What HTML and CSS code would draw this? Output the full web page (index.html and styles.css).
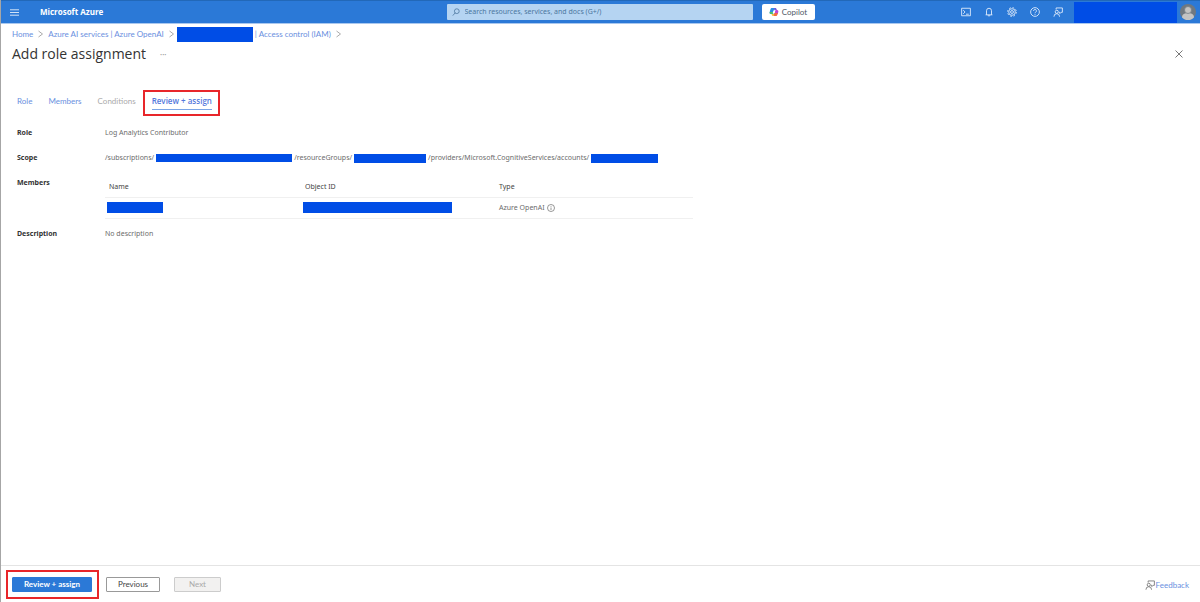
FILE: index.html
```html
<!DOCTYPE html>
<html lang="en">
<head>
<meta charset="utf-8">
<meta name="viewport" content="width=device-width, initial-scale=1">
<title>Add role assignment - Microsoft Azure</title>
<link rel="stylesheet" href="styles.css">
</head>
<body>
<svg class="defs" aria-hidden="true">
  <symbol id="person-feedback" viewBox="0 0 16 16">
    <path d="M5 4V1.500h10v7h-2l-2 2V8.500H9.500M6 10.200a2.500 2.500 0 1 0 0-5 2.500 2.500 0 0 0 0 5zM1.500 15.500a4.500 4.800 0 0 1 9 0"/>
  </symbol>
  <symbol id="chevron" viewBox="0 0 5 8"><path d="M.5 1l4 3-4 3"/></symbol>
</svg>
<header class="topbar">
  <div class="topbar-left">
    <button class="icon-button menu" aria-label="Show portal menu"><svg class="icon" viewBox="0 0 10 10"><path d="M0 2h10M0 5h10M0 8h10"/></svg></button>
    <a class="brand" href="#">Microsoft Azure</a>
  </div>
  <div class="topbar-search">
    <label class="search">
      <svg class="icon search-icon" viewBox="0 0 10 10"><circle cx="6" cy="4" r="3"/><path d="M4 6L1 9.500"/></svg>
      <input type="text" aria-label="Search" placeholder="Search resources, services, and docs (G+/)">
    </label>
    <button class="copilot">
      <svg class="copilot-logo" viewBox="0 0 10 10">
        <path fill="#2b8fe6" d="M3 1h3.200l-2 6H2C.8 7 .4 6 .7 5l.8-2.800C1.700 1.500 2.200 1 3 1z"/>
        <path fill="#4bbf6b" d="M.7 5h3.600L3.600 7H2C.8 7 .4 6 .7 5z"/>
        <path fill="#7659d8" d="M5 1h1.500c.6 0 .8.500 1 1l.4 1H5.500z"/>
        <path fill="#c048d4" d="M6.500 3H8c1.200 0 1.600 1 1.300 2L8.700 7H5.200z"/>
        <path fill="#f36a43" d="M5.200 6h3.700l-.4 1.500C8.300 8.400 7.800 9 7 9H4.300z"/>
        <path fill="#f5b83d" d="M2.500 7h2.700l-.6 2H4c-.8 0-1.200-.8-1.500-2z"/>
        <path fill="#fff" d="M4.400 3.500h1.800L5.500 6.300H3.700z"/>
      </svg>
      <span>Copilot</span>
    </button>
  </div>
  <div class="topbar-right">
    <button class="icon-button" aria-label="Cloud Shell"><svg class="icon" viewBox="0 0 16 16"><path d="M1 2h14v12H1zM3.500 5l3 3-3 3M8 11.500h4.500"/></svg></button>
    <button class="icon-button" aria-label="Notifications"><svg class="icon" viewBox="0 0 16 16"><path d="M2.500 12.500h11M4 12.500V6a4 4 0 0 1 8 0v6.500M6.500 13a1.500 1.500 0 0 0 3 0"/></svg></button>
    <button class="icon-button" aria-label="Settings"><svg class="icon" viewBox="0 0 16 16"><circle cx="8" cy="8" r="5.300"/><circle cx="8" cy="8" r="2.300"/><circle class="teeth" cx="8" cy="8" r="7"/></svg></button>
    <button class="icon-button" aria-label="Help"><svg class="icon" viewBox="0 0 16 16"><circle cx="8" cy="8" r="7"/><path d="M5.700 6.300a2.300 2.300 0 1 1 3.500 1.900C8.300 8.800 8 9 8 10M8 11.300v1.300"/></svg></button>
    <button class="icon-button" aria-label="Feedback"><svg class="icon"><use href="#person-feedback"/></svg></button>
    <div class="account"></div>
    <button class="avatar" aria-label="Account"><svg viewBox="0 0 16 16"><circle cx="8" cy="8" r="8" fill="#6f7880"/><path fill="#c3c3c3" d="M2 13.500C2 10 5 9 8 9s6 1 6 4.500a8 8 0 0 1-12 0z"/><circle cx="8" cy="6" r="3.500" fill="#c3c3c3" stroke="#6f7880" stroke-width=".7"/></svg></button>
  </div>
</header>

<nav class="breadcrumb" aria-label="Breadcrumb">
  <a href="#">Home</a><svg class="chevron"><use href="#chevron"/></svg>
  <a href="#">Azure AI services | Azure OpenAI</a><svg class="chevron"><use href="#chevron"/></svg>
  <a class="resource" href="#"><span class="redacted crumb-name"></span>| Access control (IAM)</a><svg class="chevron"><use href="#chevron"/></svg>
</nav>

<div class="title-row">
  <h1>Add role assignment</h1>
  <button class="more" aria-label="More">···</button>
  <button class="close" aria-label="Close"><svg class="icon" viewBox="0 0 8 8"><path d="M.5.500l7 7M7.500.500l-7 7"/></svg></button>
</div>

<main class="content">
  <nav class="tabs" aria-label="Steps">
    <a href="#">Role</a>
    <a href="#">Members</a>
    <span class="disabled">Conditions</span>
    <a class="current marked" href="#" aria-current="step">Review + assign</a>
  </nav>
  <dl class="summary">
    <dt>Role</dt>
    <dd>Log Analytics Contributor</dd>
    <dt>Scope</dt>
    <dd class="scope">/subscriptions/<span class="redacted subscription"></span>/resourceGroups/<span class="redacted group"></span>/providers/Microsoft.CognitiveServices/accounts/<span class="redacted resource-id"></span></dd>
    <dt>Members</dt>
    <dd class="member-list">
      <table class="members">
        <thead><tr><th>Name</th><th>Object ID</th><th>Type</th></tr></thead>
        <tbody><tr>
          <td><span class="redacted member"></span></td>
          <td><span class="redacted object"></span></td>
          <td><span class="type">Azure OpenAI <svg class="icon info" viewBox="0 0 16 16"><circle cx="8" cy="8" r="7"/><path d="M8 7v5M8 4v1.500"/></svg></span></td>
        </tr></tbody>
      </table>
    </dd>
    <dt>Description</dt>
    <dd>No description</dd>
  </dl>
</main>

<footer class="actions">
  <button class="button primary marked">Review + assign</button>
  <button class="button previous">Previous</button>
  <button class="button next" disabled>Next</button>
  <a class="feedback" href="#"><svg class="icon"><use href="#person-feedback"/></svg>Feedback</a>
</footer>
</body>
</html>
```
FILE: styles.css
```css
* { box-sizing: border-box; }

body {
  margin: 0;
  min-height: 100vh;
  display: flex;
  flex-direction: column;
  border-left: 1px solid #a6a6a6;
  background: #fff;
  color: #6b6b6b;
  font: 8px/10px Lato, "Open Sans", sans-serif;
}

a { color: #6a8fe0; text-decoration: none; }
button, input { font: inherit; color: inherit; }
button { padding: 0; border: 0; background: none; }
svg { display: block; flex: none; }

.defs { position: absolute; width: 0; height: 0; }
.icon { width: 10px; height: 10px; fill: none; stroke: currentColor; stroke-width: 1.4; }
.redacted { display: block; flex: none; background: #004de6; }
.marked { position: relative; }
.marked::after { content: ""; position: absolute; inset: -8px; border: 2px solid #e8262a; pointer-events: none; }

/* Top bar */
.topbar {
  display: grid;
  grid-template-columns: 1fr auto 1fr;
  align-items: center;
  height: 24px;
  margin-left: -1px;
  border-top: 1px solid #2268b8;
  border-bottom: 1px solid #a9c8ef;
  background: #2b79d7;
  color: #e3eefb;
}
.topbar-left, .topbar-search, .topbar-right { display: flex; align-items: center; }
.topbar-left { gap: 21px; padding-left: 10px; }
.menu .icon { width: 9px; height: 9px; stroke-width: 1; }
.brand { color: #fff; font: 700 8px/10px "Open Sans", sans-serif; }
.topbar-search { gap: 9px; padding-left: 61px; }
.search {
  display: flex;
  align-items: center;
  gap: 5px;
  width: 306px;
  height: 16px;
  padding: 0 5px;
  border-radius: 1px;
  background: #b5d4f2;
  color: #4c779f;
  font: 7px/10px "Noto Sans", sans-serif;
}
.search-icon { width: 8px; height: 8px; stroke-width: 1; }
.search input { flex: 1; min-width: 0; padding: 0; border: 0; outline: 0; background: none; }
.search input::placeholder { color: #4c779f; opacity: 1; }
.copilot {
  display: flex;
  align-items: center;
  justify-content: center;
  gap: 3px;
  width: 53px;
  height: 16px;
  border-radius: 2px;
  background: #fff;
  color: #4f5967;
}
.copilot-logo { width: 10px; height: 10px; }
.topbar-right { justify-content: flex-end; gap: 13px; padding-right: 4px; }
.teeth { stroke-dasharray: 2.750; }
.account { width: 103px; height: 21px; margin-left: -2px; background: #004de6; }
.avatar { margin-left: -10px; }
.avatar svg { width: 16px; height: 16px; }

/* Page heading */
.breadcrumb { display: flex; align-items: center; gap: 5px; height: 20px; padding: 0 11px; }
.chevron { width: 5px; height: 8px; fill: none; stroke: #aaa; stroke-width: 1; }
.resource { display: flex; align-items: center; gap: 2px; margin-left: -2px; }
.crumb-name { width: 76px; height: 15px; }
.title-row { display: flex; align-items: center; height: 20px; padding: 0 17px 0 11px; }
h1 { margin: 0; color: #333; font: 14px/20px "Open Sans", sans-serif; }
.more { margin-left: 14px; color: #999; }
.close { margin-left: auto; color: #777; }
.close .icon { width: 8px; height: 8px; stroke-width: 1; }

/* Wizard */
.content { flex: 1; padding: 29px 16px 16px; }
.tabs { display: flex; gap: 16px; }
.tabs a, .tabs span { padding: 3px 0; }
.tabs .disabled { color: #aaa; }
.tabs .current { font-family: "Open Sans", sans-serif; font-weight: 600; color: #5478dc; box-shadow: 0 1px #7aa4e6; }
.tabs .current::after { inset: -3px -8px -7px -9px; }
.summary {
  display: grid;
  grid-template-columns: 88px 1fr;
  margin: 19px 0 0;
  font: 7px/10px "Noto Sans", sans-serif;
}
.summary dt { color: #333; font-weight: 700; }
.summary dd { margin: 0; padding-bottom: 15px; }
.summary .member-list { padding-bottom: 10px; }
.scope { display: flex; align-items: center; gap: 2px; }
.subscription { width: 136px; height: 8px; }
.group { width: 72px; height: 9px; }
.resource-id { width: 67px; height: 9px; }
.members { width: 588px; max-width: 100%; border-collapse: collapse; table-layout: fixed; }
.members th, .members td { width: 33%; padding: 0 0 0 4px; border-bottom: 1px solid #f0f0f0; text-align: left; vertical-align: middle; }
.members th { height: 19px; color: #444; font-weight: 400; }
.members td { height: 21px; padding-left: 2px; }
.member { width: 56px; height: 11px; }
.object { width: 149px; height: 11px; }
.type { display: flex; align-items: center; gap: 2px; }
.info { width: 8px; height: 8px; }
.members th:last-child, .members td:last-child { padding-left: 2px; }

/* Footer */
.actions { display: flex; align-items: center; gap: 14px; height: 37px; padding: 0 11px; border-top: 1px solid #e4e4e4; }
.button { height: 15px; border: 1px solid #999; border-radius: 1px; background: #fff; color: #444; }
.primary { width: 80px; border-color: #2b79d7; background: #2b79d7; color: #fff; font-weight: 700; }
.primary::after { inset: -8px -8px -8px -7px; }
.previous { width: 54px; }
.next { width: 47px; border-color: #ccc; background: #f2f1f0; color: #aaa; }
.feedback { display: flex; align-items: center; gap: 1px; margin-left: auto; padding-top: 2px; }
.feedback .icon { color: #777; }
```
